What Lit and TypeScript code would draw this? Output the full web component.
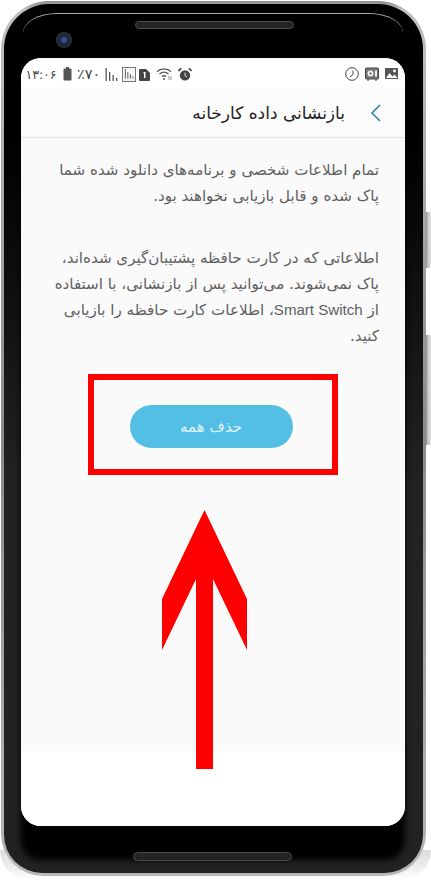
import { LitElement, html, css, svg } from "lit";
import { customElement } from "lit/decorators.js";

@customElement("app-root")
export class AppRoot extends LitElement {
  static styles = css`
    :host {
      display: block;
      position: relative;
      width: 431px;
      height: 885px;
      overflow: hidden;
      background: #fff;
      font-family: "DejaVu Sans", "Noto Sans", sans-serif;
    }
    .stage { position: relative; width: 431px; height: 885px; padding: 1px 0 0 1px; box-sizing: border-box; }
    .ground {
      position: absolute; left: 0; right: 0; top: 850px; height: 30px;
      background: linear-gradient(#ddd, #eee 60%, #fff);
      border-radius: 0 0 30px 30px;
    }
    .key { position: absolute; left: 424px; width: 7px; background: linear-gradient(90deg, #8a8a8a, #c9c9c9 40%, #e2e2e2); box-sizing: border-box; border-left: 2px solid #777; }
    .key.a { top: 212px; height: 56px; }
    .key.b { top: 335px; height: 110px; }
    .phone {
      position: relative;
      width: 425px;
      height: 875px;
      box-sizing: border-box;
      border-radius: 48px 48px 42px 42px;
      background: linear-gradient(180deg, #8d8d8d, #c0c0c0 1%, #8a8a8a 50%, #b8b8b8);
      padding: 3px;
    }
    .body {
      height: 100%;
      box-sizing: border-box;
      border-radius: 45px 45px 38px 38px;
      background: linear-gradient(180deg, #000 15%, #222 55%);
      display: flex;
      flex-direction: column;
      align-items: center;
      padding: 0 18px 0 17px;
      overflow: hidden;
    }
    .top { position: relative; width: 100%; height: 54px; flex: none; }
    .topline {
      position: absolute; left: 2px; right: 2px; top: 9px; height: 24px;
      border-top: 1px solid #aaa; border-radius: 34px 34px 0 0 / 20px 20px 0 0;
    }
    .speaker {
      border: 1px solid #4a4a4a;
      background: repeating-linear-gradient(90deg, #1c1c1c 0 1px, #2c2c2c 1px 2px);
      border-radius: 5px;
      box-sizing: border-box;
      width: 159px;
      height: 9px;
    }
    .speaker.up { position: absolute; left: 114px; top: 17px; height: 8px; }
    .speaker.down { margin: 26px 2px 0 0; }
    .camera {
      position: absolute; left: 35px; top: 28px; width: 16px; height: 16px; border-radius: 50%;
      background: radial-gradient(circle at 50% 50%, #3a4f9a 0 2px, #1b2233 4px, #222a3a 6px, #2c2f36 8px);
    }
    .screen {
      width: 100%;
      height: 768px;
      flex: none;
      border-radius: 20px;
      background: #fff;
      overflow: hidden;
      display: flex;
      flex-direction: column;
      box-shadow: 0 34px 6px #000;
    }
    .app { height: 663px; flex: none; background: #fafafa; display: flex; flex-direction: column; }
    .status {
      height: 30px; flex: none; background: #fff; box-sizing: border-box;
      display: flex; justify-content: space-between; align-items: center;
      padding: 2px 7px 0 4px; color: #444;
    }
    .status .group { display: flex; align-items: center; }
    .clock { font-size: 12.5px; color: #444; width: 32px; direction: rtl; white-space: nowrap; text-align: center; }
    .pct { font-size: 14.5px; color: #444; white-space: nowrap; margin: 0 5px; width: 23px; text-align: center; }
    .header {
      height: 50px; flex: none; box-sizing: border-box;
      border-bottom: 1px solid #e4e4e4;
      display: flex; align-items: center; justify-content: flex-start; gap: 25px;
      direction: rtl; padding: 0 23px 0 0; background: #fbfbfb;
    }
    .title { font-size: 17px; color: #222; white-space: nowrap; }
    .copy { padding: 20px 26px 0 0; direction: rtl; color: #606060; font-size: 15.1px; line-height: 25.5px; }
    .line { display: block; white-space: nowrap; }
    .latin { font-family: "Liberation Sans", sans-serif; }
    .p1 { margin: 0 0 37px; }
    .p2 { margin: 0; }
    .action { display: flex; justify-content: center; margin-top: 56px; padding-right: 4px; }
    .btn {
      width: 163px; height: 43px; border: 0; border-radius: 22px; background: #54bfe5;
      color: #dff2fa; font: 15px "DejaVu Sans", sans-serif; padding: 0; direction: rtl;
    }
    .rest { flex: 1; background: #fff; }
    .mark { position: absolute; left: 88px; top: 374px; width: 250px; height: 101px; box-sizing: border-box; border: 6px solid #f00; }
    .arrow { position: absolute; left: 160px; top: 508px; }
    svg { display: block; flex: none; }
  `;

  private bars() {
    return svg`<rect x="0.500" y="1" width="1.300" height="13" /><rect x="4" y="5" width="1.300" height="9"/><rect x="7.500" y="8" width="1.300" height="6"/><rect x="11" y="11" width="1.300" height="3"/>`;
  }

  render() {
    return html`
      <div class="stage">
        <div class="ground"></div>
        <div class="key a"></div>
        <div class="key b"></div>
        <div class="phone">
          <div class="body">
            <div class="top">
              <div class="topline"></div>
              <div class="speaker up"></div>
              <div class="camera"></div>
            </div>
            <div class="screen">
              <div class="status">
                <div class="group">
                  <span class="clock">۱۳:۰۶</span>
                  <svg width="9" height="14" viewBox="0 0 9 14" style="margin-left:6px" fill="#555"><rect x="3" y="0" width="3" height="2"/><rect x="0.500" y="1.500" width="8" height="12" rx="1"/></svg>
                  <span class="pct">٪۷۰</span>
                  <svg width="13" height="14" viewBox="0 0 13 14" fill="#555">${this.bars()}</svg>
                  <svg width="14" height="15" viewBox="0 0 14 15" style="margin-left:4px" fill="#555"><rect x="0.500" y="0.500" width="13" height="14" fill="#f4f4f4" stroke="#777"/><g transform="translate(2.500,1.500) scale(.72)">${this.bars()}</g></svg>
                  <svg width="11" height="13" viewBox="0 0 11 13" style="margin-left:3px"><path d="M0 2a1 1 0 0 1 1-1h6l4 4v7a1 1 0 0 1-1 1H1a1 1 0 0 1-1-1z" fill="#444"/><path d="M4.500 4h2v6H5V5.400H4.500z" fill="#fff"/></svg>
                  <svg width="17" height="14" viewBox="0 0 17 14" style="margin-left:6px" fill="none" stroke="#555" stroke-width="1.300"><path d="M1 4.500c4-3.600 10-3.600 14 0M3.500 7c2.700-2.300 6.300-2.300 9 0M6 9.500c1.400-1 2.600-1 4 0"/><circle cx="8" cy="12" r="1" fill="#555" stroke="none"/><path d="M13 9v4M15 9v4" stroke-width="1" stroke="#999"/></svg>
                  <svg width="14" height="15" viewBox="0 0 15 15" style="margin-left:5px"><circle cx="7.500" cy="8.500" r="5.500" fill="#444"/><path d="M7.500 5.500v3.200l2.200 1.200" stroke="#fff" stroke-width="1" fill="none"/><path d="M0.500 3.500l3-2.500M14.500 3.500l-3-2.500" stroke="#444" stroke-width="1.800"/></svg>
                </div>
                <div class="group">
                  <svg width="14" height="14" viewBox="0 0 14 14" fill="none" stroke="#444" stroke-width="1"><circle cx="7" cy="7" r="6.300"/><path d="M8 3.500V7.500L5 10"/></svg>
                  <svg width="14" height="14" viewBox="0 0 14 14" style="margin-left:6px"><rect x="0.500" y="1" width="13" height="11" rx="1" fill="#777" stroke="#444"/><circle cx="5.500" cy="6.500" r="3" fill="#eee"/><circle cx="5.500" cy="6.500" r="1" fill="#444"/><rect x="10" y="3.500" width="2" height="6" fill="#eee"/><path d="M2 13h2M10 13h2" stroke="#444"/></svg>
                  <svg width="13" height="14" viewBox="0 0 13 14" style="margin-left:6px"><rect x="0" y="1" width="13" height="11" fill="#555"/><circle cx="9.500" cy="4" r="1.400" fill="#fff"/><path d="M1 11l3.500-5 3 3.500 2-2 3 3.500z" fill="#fff"/></svg>
                </div>
              </div>
              <div class="app">
                <div class="header">
                  <svg width="12" height="18" viewBox="0 0 12 18" fill="none" stroke="#2a86ad" stroke-width="1.600" style="transform:scaleX(-1)"><path d="M2 1l8 8-8 8" /></svg>
                  <span class="title">بازنشانی داده کارخانه</span>
                </div>
                <div class="copy">
                  <p class="p1">
                    <span class="line">تمام اطلاعات شخصی و برنامه‌های دانلود شده شما</span>
                    <span class="line">پاک شده و قابل بازیابی نخواهند بود.</span>
                  </p>
                  <p class="p2">
                    <span class="line">اطلاعاتی که در کارت حافظه پشتیبان‌گیری شده‌اند،</span>
                    <span class="line">پاک نمی‌شوند. می‌توانید پس از بازنشانی، با استفاده</span>
                    <span class="line">از <span class="latin">Smart Switch</span>، اطلاعات کارت حافظه را بازیابی</span>
                    <span class="line">کنید.</span>
                  </p>
                </div>
                <div class="action"><button class="btn">حذف همه</button></div>
              </div>
              <div class="rest"></div>
            </div>
            <div class="speaker down"></div>
          </div>
        </div>
        <div class="mark"></div>
        <svg class="arrow" width="90" height="262" viewBox="160 508 90 262" fill="#f00">
          <path d="M204.500 510L247 599V650L213 579V769H196V579L162 650V599z"/>
        </svg>
      </div>
    `;
  }
}
